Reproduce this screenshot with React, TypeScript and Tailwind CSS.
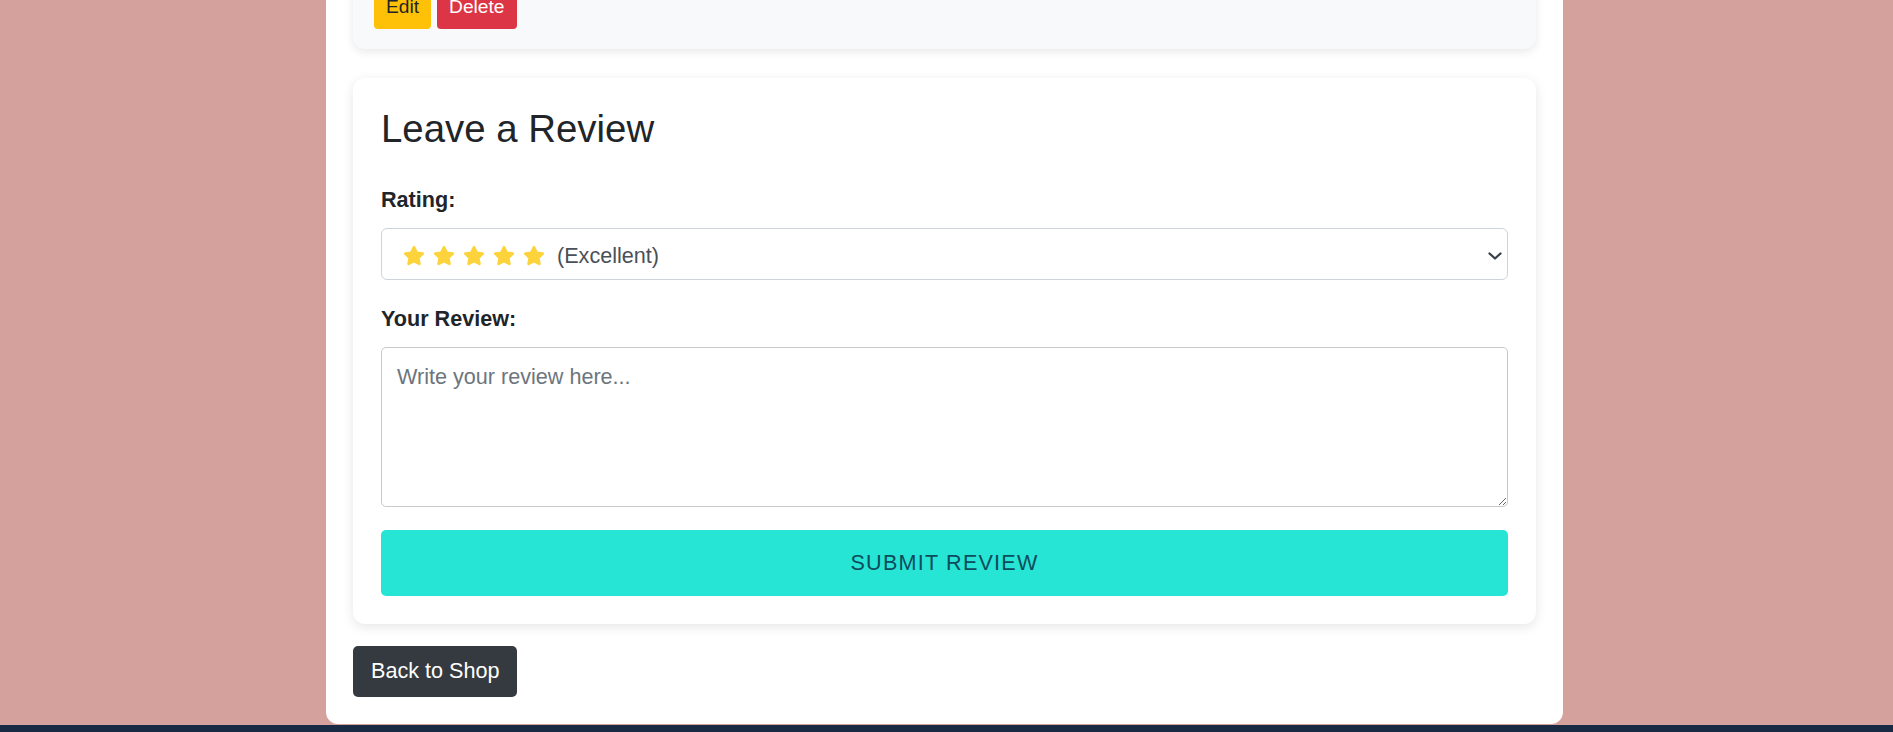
import React from "react";

function Star() {
  return (
    <svg width="22" height="22" viewBox="0 0 24 24" className="shrink-0">
      <polygon
        points="12,2.5 14.94,8.46 21.51,9.41 16.76,14.05 17.88,20.59 12,17.5 6.12,20.59 7.24,14.05 2.49,9.41 9.06,8.46"
        fill="#fdd33c"
        stroke="#fdd33c"
        strokeWidth="3"
        strokeLinejoin="round"
      />
    </svg>
  );
}

export default function App() {
  return (
    <div className="h-[732px] overflow-hidden bg-[#d4a19c] flex flex-col font-['Liberation_Sans',Arial,sans-serif] text-[#212529]">
      <div className="h-[724px] shrink-0 flex flex-col justify-end">
        <div className="ml-[326px] w-[1237px] shrink-0 bg-white rounded-b-[12px] px-[27px] pb-[27px]">
          <div className="rounded-[12px] bg-[#f8f9fa] px-[21px] pt-[20px] pb-[20px] shadow-[0_3px_10px_rgba(0,0,0,0.09)]">
            <div className="flex gap-[6px]">
              <button className="h-[43px] px-[12px] rounded-[4px] bg-[#ffc107] text-[#212529] text-[19.2px] leading-[28.8px]">
                Edit
              </button>
              <button className="h-[43px] px-[12px] rounded-[4px] bg-[#dc3545] text-white text-[19.2px] leading-[28.8px]">
                Delete
              </button>
            </div>
          </div>

          <div className="mt-[29px] rounded-[12px] bg-white p-[28px] shadow-[0_3px_12px_rgba(0,0,0,0.1)]">
            <h2 className="text-[38.4px] leading-[1.2] font-normal mb-[32px]">Leave a Review</h2>

            <div className="mb-[23px]">
              <label className="block text-[21.6px] leading-[32.4px] font-bold mb-[11.5px]">Rating:</label>
              <div className="relative h-[52px] w-full rounded-[6px] border border-[#ced4da] bg-white flex items-center pl-[21px] pt-[4px]">
                <div className="flex items-center gap-[8px]">
                  <Star />
                  <Star />
                  <Star />
                  <Star />
                  <Star />
                </div>
                <span className="ml-[12px] text-[21.6px] leading-[32.4px] text-[#495057]">(Excellent)</span>
                <svg
                  width="14"
                  height="8"
                  viewBox="0 0 14 8"
                  className="absolute right-[5px] top-[23px]"
                >
                  <path d="M1.5 1.5 L7 6.5 L12.5 1.5" fill="none" stroke="#3b4148" strokeWidth="2.3" strokeLinecap="round" strokeLinejoin="round" />
                </svg>
              </div>
            </div>

            <div>
              <label className="block text-[21.6px] leading-[32.4px] font-bold mb-[11.5px]">Your Review:</label>
              <textarea
                placeholder="Write your review here..."
                className="block h-[160px] w-full rounded-[5px] border border-[#c9c9c9] px-[15px] pt-[13px] text-[21.6px] leading-[32.4px] placeholder:text-[#6c757d] outline-none"
              />
            </div>

            <button className="mt-[23px] h-[66px] w-full rounded-[5px] bg-[#27e5d4] text-[#0d4c5c] text-[21.6px] tracking-[1.2px] uppercase">
              Submit Review
            </button>
          </div>

          <button className="mt-[22px] h-[51px] px-[18px] rounded-[5px] bg-[#343a40] text-white text-[21.6px] leading-[32.4px]">
            Back to Shop
          </button>
        </div>
      </div>
      <div className="mt-[1px] flex-1 bg-[#182a44]" />
    </div>
  );
}
